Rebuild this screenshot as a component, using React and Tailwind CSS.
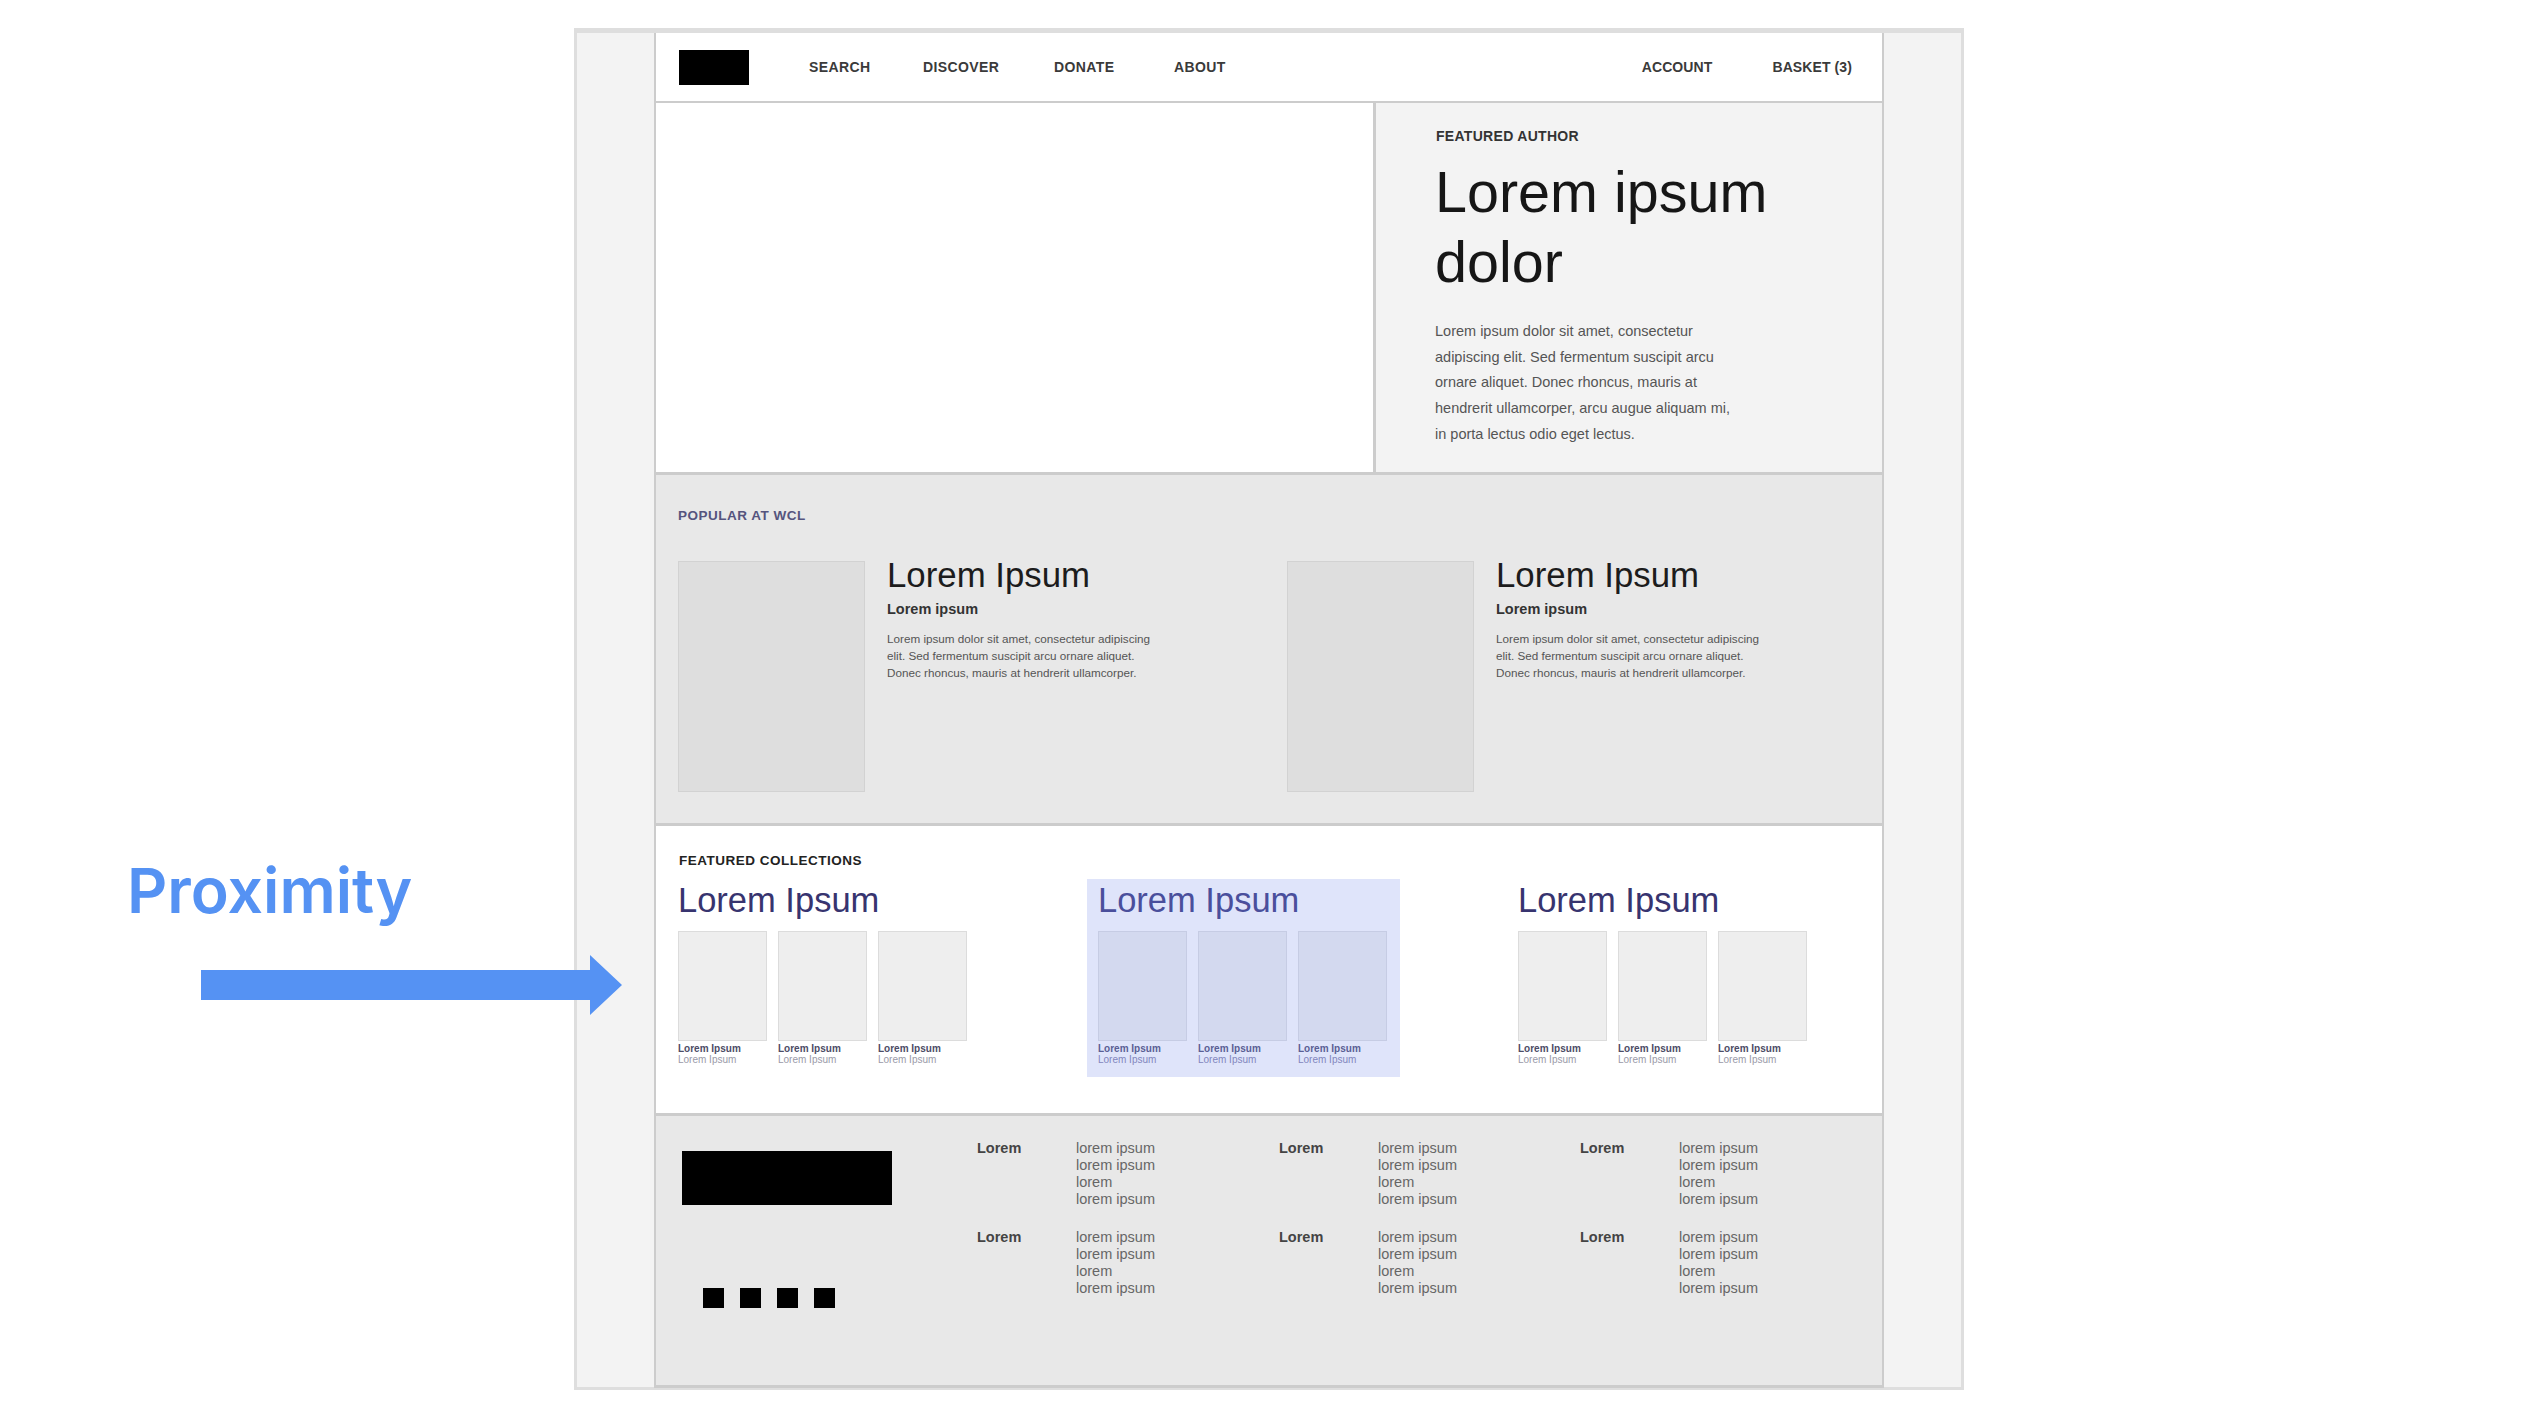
import React from "react";

const sans = { fontFamily: '"Liberation Sans", Arial, sans-serif' };

const navLeft = [
  { label: "SEARCH", width: "w-[114px]" },
  { label: "DISCOVER", width: "w-[131px]" },
  { label: "DONATE", width: "w-[120px]" },
  { label: "ABOUT", width: "w-[70px]" },
];

const PopularCard = () => (
  <div className="flex w-[609px] shrink-0 gap-[22px]">
    <div className="h-[231px] w-[187px] shrink-0 border border-[#d2d2d2] bg-[#dedede]" />
    <div className="-mt-[6px]">
      <h3 className="text-[34.8px] leading-[40px] text-[#1c1c1c]">Lorem Ipsum</h3>
      <p className="mt-[4px] text-[14.5px] leading-[20px] font-bold text-[#333]">Lorem ipsum</p>
      <p className="mt-[11px] w-[280px] text-[11.7px] leading-[17px] text-[#555]">
        Lorem ipsum dolor sit amet, consectetur adipiscing elit. Sed fermentum suscipit arcu ornare aliquet. Donec rhoncus, mauris at hendrerit ullamcorper.
      </p>
    </div>
  </div>
);

const Collection = ({ highlight }) => (
  <div className={`h-[198px] w-[313px] pt-[1px] pl-[11px] ${highlight ? "bg-[#dfe4fa]" : ""}`}>
    <h3 className={`text-[34.5px] leading-[40px] ${highlight ? "text-[#4a4f9c]" : "text-[#37346f]"}`}>Lorem Ipsum</h3>
    <div className="mt-[11px] flex gap-[11px]">
      {[0, 1, 2].map((i) => (
        <div key={i} className="w-[89px]">
          <div className={`h-[110px] border ${highlight ? "border-[#c6cce4] bg-[#d3d9ef]" : "border-[#dcdcdc] bg-[#eeeeee]"}`} />
          <p className={`mt-[2px] text-[10px] leading-[12px] font-bold ${highlight ? "text-[#5a5f95]" : "text-[#4c4c66]"}`}>Lorem Ipsum</p>
          <p className={`text-[10px] leading-[10px] ${highlight ? "text-[#8286bd]" : "text-[#9a9aa8]"}`}>Lorem Ipsum</p>
        </div>
      ))}
    </div>
  </div>
);

const FooterLinks = () => (
  <div className="flex w-[201px]">
    <p className="w-[99px] text-[14.5px] leading-[17px] font-bold text-[#444]">Lorem</p>
    <div className="text-[14.5px] leading-[17px] text-[#666]">
      <p>lorem ipsum</p>
      <p>lorem ipsum</p>
      <p>lorem</p>
      <p>lorem ipsum</p>
    </div>
  </div>
);

export default function App() {
  return (
    <div className="relative flex h-[1420px] w-[2544px] bg-white pt-[28px]" style={sans}>
      {/* Left annotation */}
      <div className="w-[574px] shrink-0 pt-[826px] pl-[127px]">
        <h1 className="text-[62.5px] leading-[72px] font-semibold text-[#5592f3]" style={{ fontFamily: 'Inter, sans-serif' }}>
          Proximity
        </h1>
      </div>
      <svg className="absolute top-[955px] left-[201px] z-10" width="421" height="60" viewBox="0 0 421 60">
        <path d="M0 15H389V0L421 30L389 60V45H0Z" fill="#5592f3" />
      </svg>

      {/* Slide frame */}
      <div className="h-[1362px] w-[1390px] shrink-0 border-[3px] border-t-[5px] border-[#dedede] bg-[#f3f3f3] pl-[77px]">
        <div className="h-[1355px] w-[1230px] border-x-2 border-[#cccccc] bg-white">
          {/* Nav */}
          <div className="flex h-[70px] items-center border-b-2 border-[#cccccc] pr-[30px] pl-[23px] text-[14px] font-bold tracking-[0.4px] text-[#3a3a3a]">
            <div className="h-[35px] w-[70px] bg-black" />
            <nav className="ml-[60px] flex">
              {navLeft.map((item) => (
                <span key={item.label} className={item.width}>{item.label}</span>
              ))}
            </nav>
            <div className="ml-auto flex gap-[60px] tracking-[0.1px]">
              <span>ACCOUNT</span>
              <span>BASKET (3)</span>
            </div>
          </div>

          {/* Hero */}
          <div className="flex h-[369px]">
            <div className="w-[720px] border-r-[3px] border-[#cccccc]" />
            <div className="flex-1 bg-[#f3f3f3] pt-[24px] pl-[60px]">
              <p className="text-[14px] leading-[18px] font-bold tracking-[0.3px] text-[#333]">FEATURED AUTHOR</p>
              <h2 className="mt-[12px] -ml-[1px] w-[400px] text-[57.5px] leading-[70px] text-[#161616]">Lorem ipsum dolor</h2>
              <p className="mt-[22px] -ml-[1px] w-[310px] text-[14.5px] leading-[25.7px] text-[#555]">
                Lorem ipsum dolor sit amet, consectetur adipiscing elit. Sed fermentum suscipit arcu ornare aliquet. Donec rhoncus, mauris at hendrerit ullamcorper, arcu augue aliquam mi, in porta lectus odio eget lectus.
              </p>
            </div>
          </div>

          {/* Popular */}
          <div className="h-[354px] border-y-[3px] border-[#cccccc] bg-[#e8e8e8] pt-[32px] pl-[22px]">
            <p className="text-[13.5px] leading-[18px] font-bold tracking-[0.5px] text-[#55547e]">POPULAR AT WCL</p>
            <div className="mt-[36px] flex">
              <PopularCard />
              <PopularCard />
            </div>
          </div>

          {/* Featured collections */}
          <div className="h-[287px] bg-white pl-[11px]">
            <p className="pt-[26px] pl-[12px] text-[13.5px] leading-[18px] font-bold tracking-[0.5px] text-[#222]">FEATURED COLLECTIONS</p>
            <div className="mt-[9px] flex gap-[107px]">
              <Collection />
              <Collection highlight />
              <Collection />
            </div>
          </div>

          {/* Footer */}
          <div className="flex h-[275px] border-y-[3px] border-[#cccccc] bg-[#e8e8e8] pl-[26px]">
            <div className="w-[295px] pt-[35px]">
              <div className="h-[54px] w-[210px] bg-black" />
              <div className="mt-[83px] ml-[21px] flex gap-[16px]">
                <div className="h-[20px] w-[21px] bg-black" />
                <div className="h-[20px] w-[21px] bg-black" />
                <div className="h-[20px] w-[21px] bg-black" />
                <div className="h-[20px] w-[21px] bg-black" />
              </div>
            </div>
            <div className="grid grid-cols-[302px_301px_201px] content-start gap-y-[21px] pt-[24px]">
              {[0, 1, 2, 3, 4, 5].map((i) => (
                <FooterLinks key={i} />
              ))}
            </div>
          </div>
        </div>
      </div>
    </div>
  );
}
